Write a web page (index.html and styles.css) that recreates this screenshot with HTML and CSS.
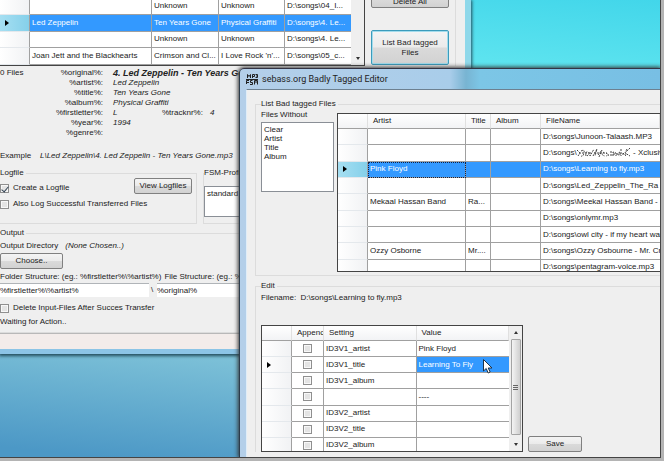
FILE: index.html
```html
<!DOCTYPE html>
<html lang="en">
<head>
  <meta charset="UTF-8">
  <meta name="viewport" content="width=device-width, initial-scale=1.0">
  <title>sebass.org Badly Tagged Editor</title>
  <link rel="stylesheet" href="styles.css">
</head>
<body>
  <div class="desktop">

    <!-- Main window -->
    <div class="window main-window">
      <div class="main-top">
        <div class="grid-view song-list">
          <table>
            <colgroup>
              <col class="col-head"><col><col class="col-title"><col class="col-album"><col class="col-file">
            </colgroup>
            <tbody>
              <tr><th></th><td></td><td>Unknown</td><td>Unknown</td><td>D:\songs\04_I...</td></tr>
              <tr class="selected"><th><span class="arrow"></span></th><td>Led Zeppelin</td><td>Ten Years Gone</td><td>Physical Graffiti</td><td>D:\songs\4. Le...</td></tr>
              <tr><th></th><td></td><td>Unknown</td><td>Unknown</td><td>D:\songs\4. Le...</td></tr>
              <tr><th></th><td>Joan Jett and the Blackhearts</td><td>Crimson and Cl...</td><td>I Love Rock 'n'...</td><td>D:\songs\05_c...</td></tr>
            </tbody>
          </table>
          <div class="scrollbar plain"><span class="down"></span></div>
        </div>
        <div class="side-buttons">
          <button class="button delete-all">Delete All</button>
          <button class="button focused">List Bad tagged<br>Files</button>
        </div>
      </div>

      <div class="info">
        <span class="files">0 Files</span>
        <dl class="tags">
          <dt>%original%:</dt><dd class="original">4. Led Zeppelin - Ten Years Gone.mp3</dd>
          <dt>%artist%:</dt><dd>Led Zeppelin</dd>
          <dt>%title%:</dt><dd>Ten Years Gone</dd>
          <dt>%album%:</dt><dd>Physical Graffiti</dd>
          <dt>%firstletter%:</dt><dd class="pair"><span>L</span><span class="key">%tracknr%:</span><span>4</span></dd>
          <dt>%year%:</dt><dd>1994</dd>
          <dt>%genre%:</dt><dd></dd>
        </dl>
      </div>
      <div class="example"><span>Example</span><i>L\Led Zeppelin\4. Led Zeppelin - Ten Years Gone.mp3</i></div>

      <div class="groups">
        <fieldset class="logfile">
          <legend>Logfile</legend>
          <div class="log-row">
            <label class="check"><input type="checkbox" checked>Create a Logfile</label>
            <button class="button">View Logfiles</button>
          </div>
          <label class="check"><input type="checkbox">Also Log Successful Transferred Files</label>
        </fieldset>
        <fieldset class="profiles">
          <legend>FSM-Profiles</legend>
          <select size="3" aria-label="FSM-Profiles">
            <option>standard</option>
          </select>
        </fieldset>
      </div>

      <fieldset class="output">
        <legend>Output</legend>
        <div class="directory"><span>Output Directory</span><i>(None Chosen..)</i></div>
        <button class="button choose">Choose..</button>
        <div class="structure-labels">
          <label for="folder">Folder Structure: (eg.: %firstletter%\%artist%)</label>
          <label for="file">File Structure: (eg.: %original%)</label>
        </div>
        <div class="structure">
          <input type="text" id="folder" value="%firstletter%\%artist%">
          <span class="slash">\</span>
          <input type="text" id="file" value="%original%">
        </div>
        <label class="check delete-check"><input type="checkbox">Delete Input-Files After Succes Transfer</label>
        <div class="status">Waiting for Action..</div>
      </fieldset>
      <div class="status-bar"></div>
    </div>

    <!-- Editor window -->
    <div class="window editor-window">
      <div class="title-bar">
        <svg class="app-icon" width="12" height="11" viewBox="0 0 12 11" fill="none" stroke="#222">
          <path d="M1.5 4V.5L3 2.5 4.500.500V4M6.500 4V.500H8.500V2.500H6.500M9.500.500H11.500V3.500H9.500M10 2H11.500"/>
          <path d="M0 5.500H12M.500 10V6.500H3M.500 8.500H3M6.500 6.500H4.500V8.500H6.500V10.500H4M8.500 10.500V6.500H11.500V10.500M10 7V9"/>
        </svg>
        <span>sebass.org Badly Tagged Editor</span>
      </div>

      <div class="client">
        <fieldset class="bad-files">
          <legend>List Bad tagged Files</legend>
          <div class="bad-row">
            <div class="without">
              <label for="without">Files Without</label>
              <select id="without" size="4">
                <option>Clear</option>
                <option>Artist</option>
                <option>Title</option>
                <option>Album</option>
              </select>
            </div>
            <div class="grid-view bad-list">
              <table>
                <colgroup>
                  <col class="col-head"><col class="col-artist"><col class="col-short"><col class="col-mid"><col>
                </colgroup>
                <thead>
                  <tr><th></th><th>Artist</th><th>Title</th><th>Album</th><th>FileName</th></tr>
                </thead>
                <tbody>
                  <tr><th></th><td></td><td></td><td></td><td>D:\songs\Junoon-Talaash.MP3</td></tr>
                  <tr>
                    <th></th><td></td><td></td><td></td>
                    <td class="cut">D:\songs\<svg class="scribble" width="54" height="10" viewBox="0 0 54 10" fill="none" stroke="#444" stroke-dasharray="2 1">
                      <path d="M0 2L3 5 1 8M4 3Q8 1 7 5T4 8M9 8Q8 3 11 4T10 8M13 4V8L17 1M16 8L20 1 18 8M21 7L25 2 22 9M27 4Q23 7 28 8M29 5L32 7 29 8M34 3V8M36 8V4L39 5V8M43 4Q39 6 43 8M44 1V8M46 5L49 8M50 1L48 5 53 8M53 0L49 4M2 5H12M17 5H30M36 6H49"/>
                    </svg> - Xclusiv</td>
                  </tr>
                  <tr class="selected"><th><span class="arrow"></span></th><td class="current">Pink Floyd</td><td></td><td></td><td>D:\songs\Learning to fly.mp3</td></tr>
                  <tr><th></th><td></td><td></td><td></td><td class="cut">D:\songs\Led_Zeppelin_The_Ra</td></tr>
                  <tr><th></th><td>Mekaal Hassan Band</td><td>Ra...</td><td></td><td class="cut">D:\songs\Meekal Hassan Band -</td></tr>
                  <tr><th></th><td></td><td></td><td></td><td>D:\songs\onlymr.mp3</td></tr>
                  <tr><th></th><td></td><td></td><td></td><td class="cut">D:\songs\owl city - if my heart wa</td></tr>
                  <tr><th></th><td>Ozzy Osborne</td><td>Mr....</td><td></td><td class="cut">D:\songs\Ozzy Osbourne - Mr. Cr</td></tr>
                  <tr><th></th><td></td><td></td><td></td><td>D:\songs\pentagram-voice.mp3</td></tr>
                </tbody>
              </table>
            </div>
          </div>
        </fieldset>

        <fieldset class="edit">
          <legend>Edit</legend>
          <div class="filename">Filename:&nbsp; D:\songs\Learning to fly.mp3</div>
          <div class="edit-row">
            <div class="grid-view tag-list">
              <table>
                <colgroup>
                  <col class="col-head"><col class="col-append"><col><col>
                </colgroup>
                <thead>
                  <tr><th></th><th>Appenc</th><th>Setting</th><th>Value</th></tr>
                </thead>
                <tbody>
                  <tr><th></th><td><input type="checkbox" aria-label="Append ID3V1_artist"></td><td>ID3V1_artist</td><td>Pink Floyd</td></tr>
                  <tr><th><span class="arrow"></span></th><td><input type="checkbox" aria-label="Append ID3V1_title"></td><td>ID3V1_title</td><td class="active">Learning To Fly</td></tr>
                  <tr><th></th><td><input type="checkbox" aria-label="Append ID3V1_album"></td><td>ID3V1_album</td><td></td></tr>
                  <tr><th></th><td><input type="checkbox" aria-label="Append"></td><td></td><td>----</td></tr>
                  <tr><th></th><td><input type="checkbox" aria-label="Append ID3V2_artist"></td><td>ID3V2_artist</td><td></td></tr>
                  <tr><th></th><td><input type="checkbox" aria-label="Append ID3V2_title"></td><td>ID3V2_title</td><td></td></tr>
                  <tr><th></th><td><input type="checkbox" aria-label="Append ID3V2_album"></td><td>ID3V2_album</td><td></td></tr>
                </tbody>
              </table>
              <div class="scrollbar"><span class="up"></span><span class="thumb"></span><span class="down"></span></div>
            </div>
            <button class="button save">Save</button>
          </div>
        </fieldset>
      </div>
    </div>

    <svg class="cursor" width="10" height="15" viewBox="0 0 10 15">
      <path d="M.5 .5V12L3.200 9.500 5.200 14 7.200 13 5.200 9H9Z" fill="#fff" stroke="#234"/>
    </svg>
  </div>
</body>
</html>
```
FILE: styles.css
```css
* {
  box-sizing: border-box;
}
body {
  margin: 0;
  height: 100vh;
  padding: 0 3px 3px 0;
  background: #b4b4b4;
  font-family: "Liberation Sans", Arial, sans-serif;
  font-size: 8px;
  line-height: 10px;
  color: #222;
}
button, input, select {
  font: inherit;
  color: inherit;
  margin: 0;
}
.desktop {
  position: relative;
  height: 100%;
  overflow: hidden;
  border-right: 1px solid #444;
  border-bottom: 1px solid #444;
  background: linear-gradient(186deg, #42d6ea 0%, #62e6f0 18%, #7ec2d8 76%, #4c98c6 98%);
}

/* windows */
.window {
  position: absolute;
  background: #efefef;
}
.main-window {
  top: 0;
  left: 0;
  right: 189px;
  border-right: 6px solid #8fd8ea;
  border-bottom: 5px solid #8cc4e6;
  box-shadow: 0 1px 3px 1px #234c5c;
}
.editor-window {
  top: 68px;
  left: 239px;
  right: 0;
  bottom: 0;
  padding-left: 6px;
  border-left: 1px solid #2c3c4c;
  border-top: 1px solid #334;
  border-top-left-radius: 5px;
  background: linear-gradient(90deg, #b4cfe9 0, #a9cdea 210px, #78b4d2 226px, #7cc6e6 240px, #78bfe4 100%);
  box-shadow: 0 0 4px 1px #333;
}
.title-bar {
  display: flex;
  align-items: center;
  gap: 4px;
  height: 20px;
  font-family: Roboto, sans-serif;
  font-size: 9px;
}
.client {
  height: calc(100% - 20px);
  padding: 9px 0 0 8px;
  background: #efefef;
  border-top: 1px solid #6d8090;
  border-left: 1px solid #e0edf8;
}

/* shared controls */
fieldset {
  min-width: 0;
  margin: 0;
  padding: 0;
  border: 1px solid #dcdcdc;
}
legend {
  padding: 0 2px 0 0;
}
.button {
  padding: 0;
  border: 1px solid #808080;
  border-radius: 2px;
  background: linear-gradient(#f4f4f4, #ebebeb 48%, #dadada 52%, #d2d2d2);
}
.button.focused {
  border-color: #3c9cbc;
  box-shadow: inset 0 0 0 1px #a4dcec;
}
.check {
  display: flex;
  align-items: center;
  gap: 4px;
}
input[type="checkbox"] {
  appearance: none;
  width: 9px;
  height: 9px;
  border: 1px solid #8f8f8f;
  background: #e4e4e4;
  box-shadow: inset 0 0 0 1px #f8f8f8;
}
input[type="checkbox"]:checked::after {
  content: "";
  display: block;
  width: 3px;
  height: 6px;
  margin-left: 2px;
  border: solid #345;
  border-width: 0 1px 1px 0;
  transform: rotate(40deg);
}
select {
  display: block;
  padding: 2px 0;
  border: 1px solid #8a8f96;
  border-radius: 0;
  background: #fff;
  overflow: hidden;
}
option {
  min-height: 0;
  padding: 0 2px;
  line-height: 10px;
}

/* data grids */
.grid-view {
  display: flex;
  overflow: hidden;
  border: 1px solid #444;
  background: #fff;
}
.grid-view table {
  flex: 1;
  width: 0;
  table-layout: fixed;
  border-collapse: separate;
  border-spacing: 0;
}
.grid-view td, .grid-view th {
  height: 16px;
  padding: 0 2px;
  border-right: 1px solid #a0a0a0;
  border-bottom: 1px solid #a0a0a0;
  text-align: left;
  font-weight: normal;
  white-space: nowrap;
  overflow: hidden;
  text-overflow: ellipsis;
}
.grid-view .cut {
  padding-right: 0;
  text-overflow: clip;
}
.grid-view td:last-child {
  border-right: 0;
}
.grid-view tbody th {
  border-bottom-color: #e4e8ec;
  background: linear-gradient(90deg, #fff, #f1f2f4);
}
.grid-view thead th {
  height: 15px;
  padding: 0 0 0 5px;
  border-right-color: #e0e0e0;
  background: linear-gradient(#fff, #f2f3f5);
  text-overflow: clip;
}
.grid-view .selected td, .grid-view .active {
  background: #3399ff;
  color: #fff;
}
.grid-view .selected th {
  background: linear-gradient(90deg, #a6dff2, #85d0ea);
}
.grid-view .current {
  outline: 1px dotted #124;
  outline-offset: -1px;
}
.col-head {
  width: 30px;
}
.arrow {
  display: block;
  width: 0;
  margin-left: 3px;
  border: 3px solid transparent;
  border-left: 4px solid #000;
  border-right: 0;
}
.scrollbar {
  display: flex;
  flex-direction: column;
  align-items: center;
  justify-content: space-between;
  width: 13px;
  padding: 5px 1px;
  background: #efefef;
}
.scrollbar.plain {
  justify-content: flex-end;
}
.up, .down {
  border: 2px solid transparent;
}
.up {
  border-top: 0;
  border-bottom: 3px solid #333;
}
.down {
  border-bottom: 0;
  border-top: 3px solid #333;
}
.thumb {
  flex: 1;
  width: 10px;
  margin: 5px 0 8px;
  border: 1px solid #a4a4a4;
  border-radius: 1px;
  background:
    repeating-linear-gradient(#666 0 1px, transparent 1px 2px) no-repeat center / 5px 5px,
    linear-gradient(90deg, #f4f4f4, #cfcfcf);
}

/* main window */
.main-top {
  display: flex;
  height: 66px;
}
.song-list {
  flex: 1;
  border-width: 0 1px 1px 0;
}
.song-list table {
  margin-top: -2px;
}
.col-title {
  width: 67px;
}
.col-album, .col-file {
  width: 66px;
}
.side-buttons {
  display: flex;
  flex-direction: column;
  gap: 22px;
  width: 91px;
  margin-right: 9px;
  padding: 0 6px;
  border-right: 1px solid #dcdcdc;
}
.delete-all {
  height: 16px;
  margin-top: -8px;
  padding-top: 4px;
}
.side-buttons .focused {
  height: 35px;
}
.info {
  display: flex;
  padding-top: 2px;
}
.files {
  width: 40px;
}
.tags {
  flex: 1;
  display: grid;
  grid-template-columns: 63px 1fr;
  grid-auto-rows: 1fr;
  column-gap: 10px;
  height: 68px;
  margin: 0;
}
.tags dt {
  text-align: right;
}
.tags dd {
  margin: 0;
  font-style: italic;
  white-space: nowrap;
}
.tags .original {
  font-size: 9px;
  font-weight: bold;
}
.pair {
  display: grid;
  grid-template-columns: 49px 48px 1fr;
}
.key {
  font-style: normal;
}
.example {
  display: flex;
  padding: 15px 0 7px;
}
.example span {
  width: 40px;
}
.groups {
  display: flex;
  gap: 6px;
}
.groups fieldset {
  height: 56px;
}
.logfile {
  width: 197px;
}
.log-row {
  display: flex;
  align-items: flex-start;
  justify-content: space-between;
  height: 21px;
  padding-right: 4px;
}
.logfile, .output {
  border-left: 0;
}
.log-row .check {
  padding-top: 5px;
}
.log-row .button {
  width: 58px;
  height: 16px;
}
.profiles {
  flex: 1;
}
.profiles select {
  width: 100%;
  height: 31px;
  margin-top: 8px;
}
.output {
  margin-top: 4px;
  padding-bottom: 5px;
}
.directory {
  display: flex;
  gap: 7px;
  padding: 3px 0 2px;
}
.choose {
  display: block;
  width: 63px;
  height: 16px;
}
.structure-labels {
  display: flex;
  gap: 3px;
  padding: 3px 0 1px;
  white-space: nowrap;
}
.structure {
  display: grid;
  grid-template-columns: 149px 8px 1fr;
}
.structure input {
  width: 100%;
  height: 14px;
  padding: 0;
  border: 0;
  border-top: 1px solid #b0b4b8;
  background: #fff;
}
.slash {
  padding: 2px 2px 0;
}
.delete-check {
  padding-top: 6px;
}
.status {
  padding-top: 4px;
}
.status-bar {
  height: 16px;
  border-top: 1px solid #b8b8b8;
  background: #f3ecea;
}

/* editor window */
.bad-files, .edit {
  border-right: 0;
}
.bad-files {
  padding-left: 5px;
}
.bad-row {
  display: flex;
  gap: 3px;
  height: 166px;
}
.without {
  width: 73px;
  padding-top: 1px;
}
.without select {
  width: 100%;
  height: 70px;
  margin-top: 2px;
}
.bad-list {
  flex: 1;
  height: 159px;
  margin-top: 4px;
  border-right: 0;
}
.bad-list table {
  height: 162px;
}
.col-artist {
  width: 98px;
}
.col-short {
  width: 25px;
}
.col-mid {
  width: 50px;
}
.scribble {
  vertical-align: middle;
}
.edit {
  margin-top: 5px;
  padding-left: 5px;
  border-bottom: 0;
}
.filename {
  padding-top: 2px;
}
.edit-row {
  display: flex;
  align-items: flex-end;
  gap: 5px;
  padding-top: 22px;
}
.tag-list {
  width: 262px;
  height: 127px;
}
.tag-list table {
  height: 128px;
}
.col-append {
  width: 32px;
}
.tag-list input {
  display: block;
  margin: 0 auto;
}
.save {
  width: 54px;
  height: 16px;
}

/* mouse pointer */
.cursor {
  position: absolute;
  left: 483px;
  top: 359px;
}
```
